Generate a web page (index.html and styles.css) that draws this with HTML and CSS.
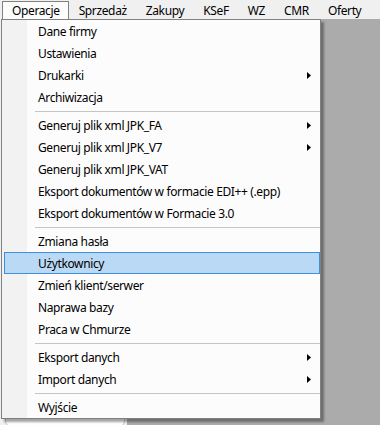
FILE: index.html
```html
<!DOCTYPE html>
<html lang="pl">
<head>
<meta charset="utf-8">
<title>Operacje</title>
<link rel="stylesheet" href="styles.css">
</head>
<body>
<div class="app">
  <div class="menubar">
    <div class="mb-item open">Operacje</div>
    <div class="mb-item">Sprzedaż</div>
    <div class="mb-item">Zakupy</div>
    <div class="mb-item">KSeF</div>
    <div class="mb-item">WZ</div>
    <div class="mb-item">CMR</div>
    <div class="mb-item">Oferty</div>
    <div class="mb-item">Towary</div>
  </div>
  <div class="workspace">
    <div class="side"><div class="card"></div></div>
    <div class="mdi"></div>
  </div>
  <div class="dropdown">
    <div class="mi">Dane firmy</div>
    <div class="mi">Ustawienia</div>
    <div class="mi">Drukarki<svg class="arrow" width="4" height="7" viewBox="0 0 4 7"><path d="M0 0L4 3.5L0 7Z"/></svg></div>
    <div class="mi">Archiwizacja</div>
    <div class="sep"></div>
    <div class="mi">Generuj plik xml JPK_FA<svg class="arrow" width="4" height="7" viewBox="0 0 4 7"><path d="M0 0L4 3.5L0 7Z"/></svg></div>
    <div class="mi">Generuj plik xml JPK_V7<svg class="arrow" width="4" height="7" viewBox="0 0 4 7"><path d="M0 0L4 3.5L0 7Z"/></svg></div>
    <div class="mi">Generuj plik xml JPK_VAT</div>
    <div class="mi">Eksport dokumentów w formacie EDI++ (.epp)</div>
    <div class="mi">Eksport dokumentów w Formacie 3.0</div>
    <div class="sep"></div>
    <div class="mi">Zmiana hasła</div>
    <div class="mi hl">Użytkownicy</div>
    <div class="mi">Zmień klient/serwer</div>
    <div class="mi">Naprawa bazy</div>
    <div class="mi">Praca w Chmurze</div>
    <div class="sep"></div>
    <div class="mi">Eksport danych<svg class="arrow" width="4" height="7" viewBox="0 0 4 7"><path d="M0 0L4 3.5L0 7Z"/></svg></div>
    <div class="mi">Import danych<svg class="arrow" width="4" height="7" viewBox="0 0 4 7"><path d="M0 0L4 3.5L0 7Z"/></svg></div>
    <div class="sep"></div>
    <div class="mi">Wyjście</div>
  </div>
</div>
</body>
</html>
```

FILE: styles.css
```css
html, body {
  margin: 0;
  padding: 0;
}
body {
  width: 380px;
  height: 425px;
  overflow: hidden;
  font-family: "Noto Sans", "Open Sans", sans-serif;
  font-size: 12px;
  letter-spacing: -0.37px;
  color: #000;
  background: #ababab;
}
.app {
  position: relative;
  width: 380px;
  height: 425px;
  display: flex;
  flex-direction: column;
}
.menubar {
  height: 19px;
  flex: none;
  background: #f0f0f0;
  display: flex;
  padding-left: 2px;
  white-space: nowrap;
  overflow: hidden;
}
.mb-item {
  padding: 0 8px 0 9px;
  margin-top: 1px;
  line-height: 17px;
  border: 1px solid transparent;
  border-bottom: 0;
}
.mb-item.open {
  border-color: #808080;
  background: #fcfcfc;
  position: relative;
  z-index: 2;
  height: 18px;
}
.workspace {
  flex: 1;
  display: flex;
}
.side {
  width: 127px;
  background: #f0f0f0;
  padding: 4px 2px 0 5px;
  box-sizing: border-box;
}
.card {
  height: 100%;
  background: #fdfdfd;
  border: 1px solid #c8c8c8;
  border-radius: 6px;
}
.mdi {
  flex: 1;
  background: #ababab;
}
.dropdown {
  position: absolute;
  left: 1px;
  top: 19px;
  width: 320px;
  box-sizing: border-box;
  border: 1px solid #808080;
  background: linear-gradient(to right, #f2f2f2 0 25px, #fcfcfc 25px);
  box-shadow: 3px 3px 2px rgba(0, 0, 0, 0.35);
  z-index: 1;
}
.mi {
  height: 22px;
  box-sizing: border-box;
  display: flex;
  align-items: center;
  padding-left: 36px;
  white-space: nowrap;
}
.mi.hl {
  margin-left: 2px;
  padding-left: 33px;
  background: #bad9f4;
  border: 1px solid #3d8fe0;
}
.arrow {
  margin-left: auto;
  margin-right: 9px;
  fill: #000;
}
.sep {
  height: 1px;
  margin: 3px 0 2px 33px;
  background: #c5c5c5;
}
```
